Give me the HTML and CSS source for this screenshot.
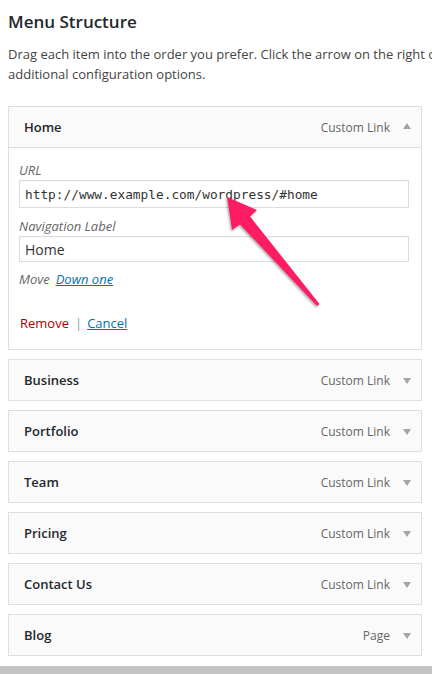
FILE: index.html
```html
<!DOCTYPE html>
<html lang="en">
<head>
<meta charset="utf-8">
<title>Menu Structure</title>
<link rel="stylesheet" href="styles.css">
</head>
<body>
<div class="page">
  <h3 class="title">Menu Structure</h3>
  <p class="desc">
    <span class="desc-line">Drag each item into the order you prefer. Click the arrow on the right of the item to reveal</span>
    <span class="desc-line">additional configuration options.</span>
  </p>
  <ul class="menu">
    <li class="item open">
      <div class="item-bar">
        <span class="item-title">Home</span>
        <span class="item-type">Custom Link</span>
        <span class="toggle up"></span>
      </div>
      <div class="item-settings">
        <label class="field-label">URL</label>
        <div class="input mono">http://www.example.com/wordpress/#home</div>
        <label class="field-label second">Navigation Label</label>
        <div class="input text short">Home</div>
        <div class="move"><span class="move-label">Move</span><a class="link italic">Down one</a></div>
        <div class="actions"><a class="remove">Remove</a><span class="sep">|</span><a class="link">Cancel</a></div>
      </div>
    </li>
    <li class="item"><div class="item-bar"><span class="item-title">Business</span><span class="item-type">Custom Link</span><span class="toggle"></span></div></li>
    <li class="item"><div class="item-bar"><span class="item-title">Portfolio</span><span class="item-type">Custom Link</span><span class="toggle"></span></div></li>
    <li class="item"><div class="item-bar"><span class="item-title">Team</span><span class="item-type">Custom Link</span><span class="toggle"></span></div></li>
    <li class="item"><div class="item-bar"><span class="item-title">Pricing</span><span class="item-type">Custom Link</span><span class="toggle"></span></div></li>
    <li class="item"><div class="item-bar"><span class="item-title">Contact Us</span><span class="item-type">Custom Link</span><span class="toggle"></span></div></li>
    <li class="item"><div class="item-bar"><span class="item-title">Blog</span><span class="item-type">Page</span><span class="toggle"></span></div></li>
  </ul>
</div>
<div class="footer-bar"></div>
<svg class="annotation" width="432" height="674" viewBox="0 0 432 674" aria-hidden="true">
  <defs>
    <filter id="shadow" x="-20%" y="-20%" width="140%" height="140%">
      <feDropShadow dx="-1" dy="1.5" stdDeviation="1.2" flood-color="#000" flood-opacity="0.35"/>
    </filter>
  </defs>
  <polygon filter="url(#shadow)" fill="#fe1a64"
    points="227,197 257,210 250,216.5 319.5,304 317,306 240,224.5 232,230"/>
</svg>
</body>
</html>
```

FILE: styles.css
```css
html, body {
  margin: 0;
  padding: 0;
  overflow: hidden;
  background: #fff;
}

body {
  font-family: "Open Sans", "Liberation Sans", sans-serif;
  font-size: 13px;
  color: #444;
  width: 432px;
  height: 674px;
  position: relative;
}

.page {
  padding: 10px 10px 0 8px;
}

.title {
  margin: 0;
  font-size: 17px;
  line-height: 24px;
  font-weight: 600;
  color: #23282d;
}

.desc {
  margin: 10px 0 0;
  line-height: 20px;
  color: #444;
  white-space: nowrap;
}

.desc-line {
  display: block;
}

.menu {
  list-style: none;
  margin: 22px 0 0;
  padding: 0;
  display: flex;
  flex-direction: column;
  gap: 9px;
}

.item {
  border: 1px solid #dfdfdf;
  background: #fafafa;
}

.item-bar {
  height: 40px;
  display: flex;
  align-items: center;
  padding: 0 10px 0 15px;
}

.item-title {
  flex: 1;
  font-weight: 600;
  color: #23282d;
  font-size: 13px;
}

.item-type {
  color: #666;
  font-size: 12px;
}

.toggle {
  width: 0;
  height: 0;
  margin-left: 13px;
  border-left: 4px solid transparent;
  border-right: 4px solid transparent;
  border-top: 6px solid #a0a5aa;
  margin-top: 2px;
}

.toggle.up {
  border-top: 0;
  border-bottom: 6px solid #a0a5aa;
  margin-top: -2px;
}

.item-settings {
  border-top: 1px solid #dfdfdf;
  background: #fff;
  padding: 12px 12px 16px 10px;
  display: flex;
  flex-direction: column;
}

.field-label {
  display: block;
  line-height: 20px;
  font-style: italic;
  color: #666;
}

.field-label.second {
  margin-top: 8px;
}

.input {
  box-sizing: border-box;
  height: 28px;
  border: 1px solid #dcdcdc;
  background: #fff;
  box-shadow: inset 0 1px 2px rgba(0, 0, 0, 0.04);
  padding: 0 5px;
  display: flex;
  align-items: center;
  color: #333;
}

.input.short {
  height: 26px;
}

.mono {
  font-family: "DejaVu Sans Mono", "Liberation Mono", monospace;
  font-size: 12.8px;
}

.text {
  font-size: 14px;
}

.move {
  margin-top: 7px;
  line-height: 20px;
  display: flex;
  gap: 6px;
}

.move-label {
  font-style: italic;
  color: #666;
}

.link {
  color: #0073aa;
  text-decoration: underline;
}

.italic {
  font-style: italic;
}

.actions {
  margin-top: 24px;
  line-height: 20px;
  display: flex;
  align-items: center;
  padding-left: 1px;
}

.remove {
  color: #a00;
}

.sep {
  color: #999;
  margin: 0 5px 0 6px;
}

.footer-bar {
  margin-top: 10px;
  height: 20px;
  background: #c4c4c4;
}

.annotation {
  position: absolute;
  left: 0;
  top: 0;
  pointer-events: none;
}
```
